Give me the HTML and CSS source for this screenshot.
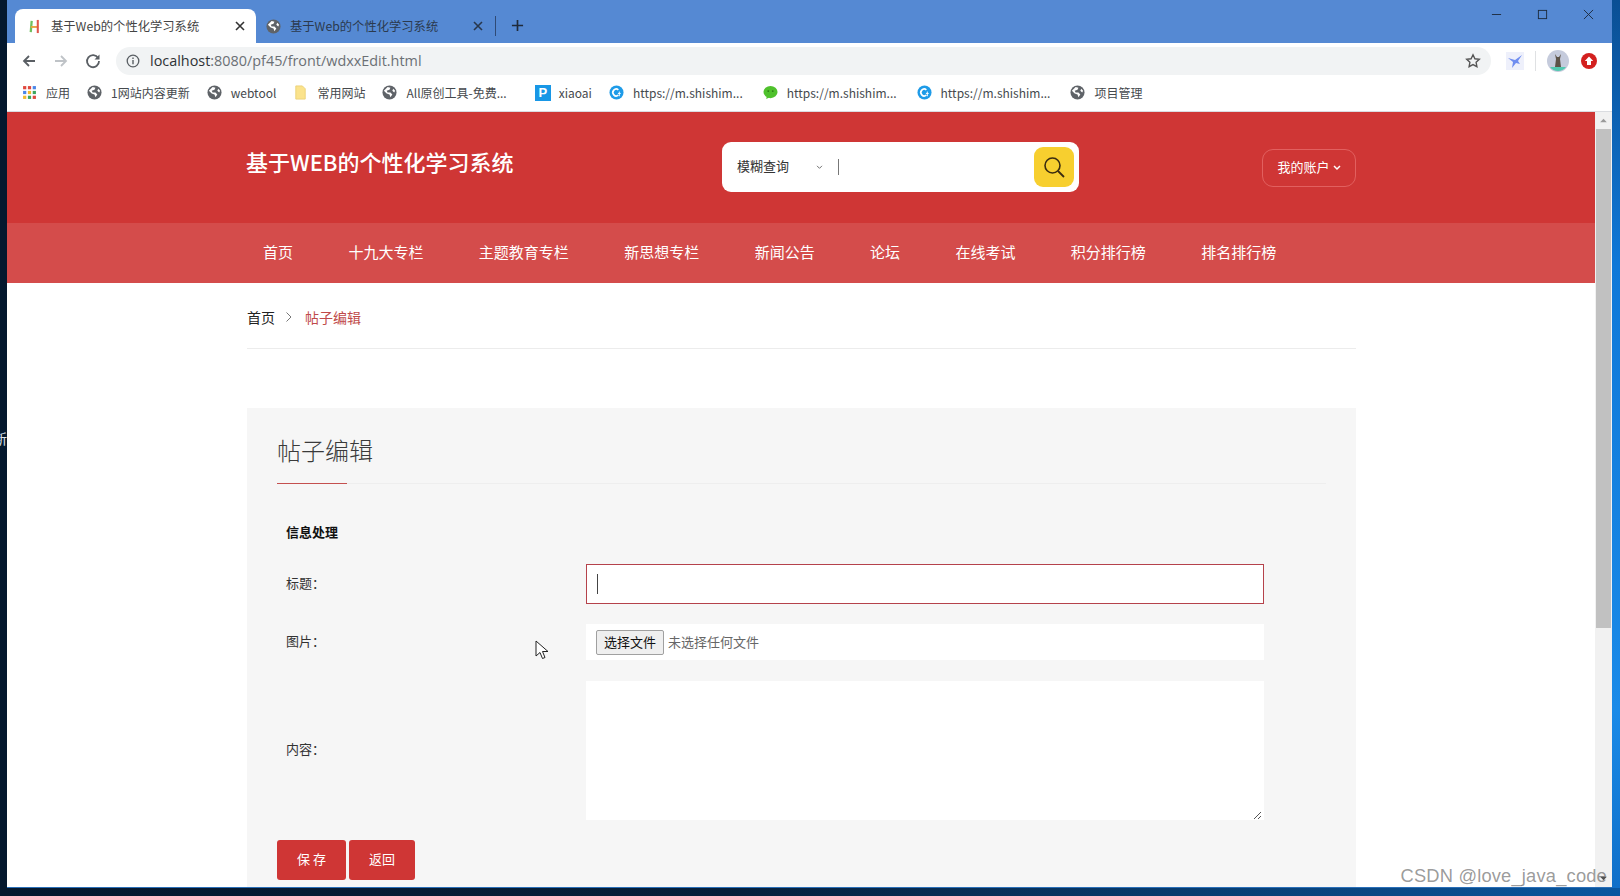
FILE: index.html
```html
<!DOCTYPE html>
<html lang="zh-CN">
<head>
<meta charset="UTF-8">
<meta name="viewport" content="width=device-width, initial-scale=1.0">
<title>基于Web的个性化学习系统</title>
<link rel="stylesheet" href="styles.css">
</head>
<body>
<div class="desktop">
  <span class="side-text">新</span>
  <div class="window">
    <div class="tabstrip">
      <div class="tab tab-active">
        <svg class="tab-icon" viewBox="0 0 16 16"><path d="M5 2L4 14" stroke="#6fbf5f" stroke-width="2.4"/><path d="M4 8.500h8" stroke="#e8a33d" stroke-width="2"/><path d="M11.500 1v14" stroke="#e0564a" stroke-width="2.200"/></svg>
        <span class="tab-title">基于Web的个性化学习系统</span>
        <svg class="tab-close" viewBox="0 0 10 10"><path d="M1 1l8 8M9 1L1 9" stroke="#333" stroke-width="1.600"/></svg>
      </div>
      <div class="tab tab-other">
        <svg class="tab-icon" viewBox="0 0 16 16"><use href="#globe"/></svg>
        <span class="tab-title">基于Web的个性化学习系统</span>
        <svg class="tab-close" viewBox="0 0 10 10"><path d="M1 1l8 8M9 1L1 9" stroke="#28374c" stroke-width="1.600"/></svg>
      </div>
      <span class="tab-sep"></span>
      <svg class="tab-new" viewBox="0 0 14 14"><path d="M7 1v12M1 7h12" stroke="#1f2a3a" stroke-width="1.800"/></svg>
      <div class="win-btns">
        <svg viewBox="0 0 12 12"><path d="M1 6h10" stroke="#1c2a3c" stroke-width="1"/></svg>
        <svg viewBox="0 0 12 12"><rect x="1.500" y="1.500" width="9" height="9" fill="none" stroke="#1c2a3c" stroke-width="1"/></svg>
        <svg viewBox="0 0 12 12"><path d="M1 1l10 10M11 1L1 11" stroke="#1c2a3c" stroke-width="1"/></svg>
      </div>
    </div>

    <div class="toolbar">
      <svg class="nav-icon" viewBox="0 0 16 16"><path d="M14 8H3M8 3L3 8l5 5" fill="none" stroke="#5a5f64" stroke-width="1.800"/></svg>
      <svg class="nav-icon" viewBox="0 0 16 16"><path d="M2 8h11M8 3l5 5-5 5" fill="none" stroke="#bfc3c7" stroke-width="1.800"/></svg>
      <svg class="nav-icon" viewBox="0 0 16 16"><path d="M13.200 5.200A6 6 0 1 0 14 8" fill="none" stroke="#5a5f64" stroke-width="1.800"/><path d="M14.500 1.500v5h-5z" fill="#5a5f64"/></svg>
      <div class="urlbar">
        <svg class="info-icon" viewBox="0 0 14 14"><circle cx="7" cy="7" r="5.800" fill="none" stroke="#5a5f64" stroke-width="1.300"/><path d="M7 6v4.200M7 3.600v1.400" stroke="#5a5f64" stroke-width="1.400"/></svg>
        <span class="url"><b>localhost</b>:8080/pf45/front/wdxxEdit.html</span>
        <svg class="star-icon" viewBox="0 0 16 16"><path d="M8 1.800l1.900 4 4.400.5-3.200 3 .8 4.400L8 11.600l-3.900 2.100.8-4.400-3.200-3 4.400-.5z" fill="none" stroke="#555" stroke-width="1.400"/></svg>
      </div>
      <svg class="ext-bird" viewBox="0 0 18 18"><rect width="18" height="18" fill="#eef0fb"/><path d="M16 3L9 8 2 6l5 4-1 6 4-5 4 1-2-3z" fill="#6f8df0"/></svg>
      <span class="toolbar-sep"></span>
      <svg class="avatar" viewBox="0 0 22 22"><circle cx="11" cy="11" r="11" fill="#c5cbdc"/><path d="M3 17h16a10 10 0 0 1-16 0z" fill="#52c9b0"/><path d="M8 4l1 5h4l1-5-2 3h-2zM9 9h4l1 8H8z" fill="#5c5348"/></svg>
      <svg class="ext-up" viewBox="0 0 16 16"><circle cx="8" cy="8" r="8" fill="#d3201f"/><path d="M8 3.500L12.200 8H10v4H6V8H3.800z" fill="#fff"/></svg>
    </div>

    <div class="bookmarks">
      <div class="bm">
        <svg class="bm-icon" viewBox="0 0 14 14">
          <g fill="#e0483e"><rect x="1" y="1" width="3" height="3"/><rect x="5.500" y="1" width="3" height="3"/></g><rect x="10" y="1" width="3" height="3" fill="#4a86e8"/>
          <rect x="1" y="5.500" width="3" height="3" fill="#4a86e8"/><rect x="5.500" y="5.500" width="3" height="3" fill="#f2b92c"/><rect x="10" y="5.500" width="3" height="3" fill="#3da55c"/>
          <rect x="1" y="10" width="3" height="3" fill="#f2b92c"/><rect x="5.500" y="10" width="3" height="3" fill="#3da55c"/><rect x="10" y="10" width="3" height="3" fill="#e0483e"/>
        </svg>应用</div>
      <div class="bm"><svg class="bm-icon" viewBox="0 0 16 16"><use href="#globe"/></svg>1网站内容更新</div>
      <div class="bm"><svg class="bm-icon" viewBox="0 0 16 16"><use href="#globe"/></svg>webtool</div>
      <div class="bm"><svg class="bm-icon" viewBox="0 0 16 16"><path d="M3 1h7l3 3v11H3z" fill="#fbe38c" stroke="#ecd277"/></svg>常用网站</div>
      <div class="bm"><svg class="bm-icon" viewBox="0 0 16 16"><use href="#globe"/></svg>All原创工具-免费...</div>
      <div class="bm bm-p"><span class="p-icon">P</span>xiaoai</div>
      <div class="bm bm-wide"><svg class="bm-icon" viewBox="0 0 16 16"><use href="#cicon"/></svg>https://m.shishim...</div>
      <div class="bm bm-wide"><svg class="bm-icon" viewBox="0 0 16 16"><ellipse cx="8" cy="7.500" rx="7.500" ry="6.500" fill="#4fc12c"/><path d="M4 12l-.5 3 3.500-2z" fill="#4fc12c"/><circle cx="5.600" cy="6.500" r="1" fill="#2c7a16"/><circle cx="10.400" cy="6.500" r="1" fill="#2c7a16"/></svg>https://m.shishim...</div>
      <div class="bm bm-wide"><svg class="bm-icon" viewBox="0 0 16 16"><use href="#cicon"/></svg>https://m.shishim...</div>
      <div class="bm"><svg class="bm-icon" viewBox="0 0 16 16"><use href="#globe"/></svg>项目管理</div>
    </div>

    <div class="viewport">
      <div class="page">
        <header class="site-head">
          <div class="wrap head-row">
            <div class="logo">基于WEB的个性化学习系统</div>
            <div class="search">
              <span class="search-type">模糊查询</span>
              <svg class="chev-sm" viewBox="0 0 8 6"><path d="M1 1l3 3 3-3" fill="none" stroke="#555" stroke-width="1"/></svg>
              <span class="search-caret"></span>
              <button class="search-btn">
                <svg viewBox="0 0 22 22"><circle cx="9.500" cy="9.500" r="7.500" fill="none" stroke="#3a2c10" stroke-width="1.600"/><path d="M15 15l6 6" stroke="#3a2c10" stroke-width="1.800"/></svg>
              </button>
            </div>
            <div class="account"><span>我的账户</span><svg viewBox="0 0 8 6"><path d="M1 1l3 3 3-3" fill="none" stroke="#fff" stroke-width="1.500"/></svg></div>
          </div>
        </header>
        <nav class="site-nav">
          <div class="wrap nav-row">
            <a>首页</a><a>十九大专栏</a><a>主题教育专栏</a><a>新思想专栏</a><a>新闻公告</a><a>论坛</a><a>在线考试</a><a>积分排行榜</a><a>排名排行榜</a>
          </div>
        </nav>
        <div class="wrap">
          <div class="crumbs">
            <span>首页</span>
            <svg viewBox="0 0 8 12"><path d="M1.500 1.500L6 6l-4.500 4.500" fill="none" stroke="#777" stroke-width="1"/></svg>
            <span class="crumb-now">帖子编辑</span>
          </div>
          <section class="panel">
            <h2 class="panel-title">帖子编辑</h2>
            <h3 class="form-head">信息处理</h3>
            <div class="form-row row-title">
              <label>标题：</label>
              <div class="fake-input"><span class="input-caret"></span></div>
            </div>
            <div class="form-row row-file">
              <label>图片：</label>
              <div class="file-box"><span class="file-btn">选择文件</span><span class="file-none">未选择任何文件</span></div>
            </div>
            <div class="form-row row-text">
              <label>内容：</label>
              <div class="text-box">
                <svg class="resizer" viewBox="0 0 9 9"><path d="M1 8l7-7M5 8l3-3" stroke="#555" stroke-width="1"/></svg>
              </div>
            </div>
            <div class="form-btns">
              <button class="btn btn-save">保 存</button>
              <button class="btn btn-back">返回</button>
            </div>
          </section>
        </div>
      </div>
      <div class="scrollbar">
        <svg class="sb-arrow" viewBox="0 0 10 6"><path d="M1 5l4-4 4 4z" fill="#9a9a9a"/></svg>
        <div class="sb-thumb"></div>
        <svg class="sb-arrow sb-down" viewBox="0 0 10 6"><path d="M1 1l4 4 4-4z" fill="#505050"/></svg>
      </div>
      <svg class="cursor" viewBox="0 0 14 20"><path d="M1 1v15l4-3.500 2.500 6 2.500-1-2.500-6H13z" fill="#fff" stroke="#222" stroke-width="1"/></svg>
      <div class="watermark">CSDN @love_java_code</div>
    </div>
  </div>
</div>

<svg class="defs" width="0" height="0">
  <defs>
    <g id="globe"><circle cx="8" cy="8" r="7.500" fill="#5f6368"/><path d="M6 2l3 1-1 2-3 1 1 2 3 0 2 2-2 3-1-3-3-1-3-3zM12 4l2 2-1 2-2-2z" fill="#fff"/></g>
    <g id="cicon"><circle cx="8" cy="8" r="7.500" fill="#1e9be8"/><path d="M10 5.200A3.600 3.600 0 1 0 10 10.800" fill="none" stroke="#fff" stroke-width="1.800"/><path d="M11 7v5M9.500 9h3" stroke="#fff" stroke-width="1"/></g>
  </defs>
</svg>
</body>
</html>
```

FILE: styles.css
```css
* {
  box-sizing: border-box;
}

html, body {
  margin: 0;
  height: 100%;
  overflow: hidden;
}

body {
  font-family: "Noto Sans CJK SC", "Noto Sans", sans-serif;
  color: #333;
}

.defs {
  display: block;
  height: 0;
}

.desktop {
  height: 896px;
  padding: 0 8px 8px 7px;
  background:
    linear-gradient(to bottom, #0a4f94 0, #0f78d8 30%, #1a8ae8 80%, #0f6fc8 100%) right top / 8px 888px no-repeat,
    linear-gradient(to right, #04182e 0, #061f3a 45%, #0a57a0 100%);
  position: relative;
}

.side-text {
  position: absolute;
  left: -7px;
  top: 428px;
  font-size: 14px;
  color: #dfe6ee;
}

.window {
  height: 888px;
  display: flex;
  flex-direction: column;
  background: #fff;
  border-bottom: 1px solid #2a6fb8;
}

/* browser frame */
.tabstrip {
  height: 43px;
  flex: none;
  background: #5589d3;
  padding: 9px 0 0 8px;
  display: flex;
  align-items: stretch;
}

.tab {
  width: 241px;
  flex: none;
  display: flex;
  align-items: center;
  padding: 0 11px 0 12px;
  font-size: 12.3px;
  color: #2b3a4e;
}

.tab-other {
  width: 239px;
  padding: 0 12px 0 10px;
}

.tab-active {
  background: #fff;
  border-radius: 8px 8px 0 0;
  color: #444;
}

.tab-icon {
  width: 15px;
  height: 15px;
  margin-right: 9px;
}

.tab-title {
  flex: 1;
}

.tab-close {
  width: 10px;
  height: 10px;
}

.tab-sep {
  width: 1px;
  height: 20px;
  margin: 7px 0 0 0;
  background: #2f4a75;
}

.tab-new {
  width: 13px;
  height: 13px;
  margin: 10px 0 0 15px;
}

.win-btns {
  margin-left: auto;
  margin-top: -9px;
  display: flex;
  gap: 35px;
  padding: 9px 18px 0 0;
}

.win-btns svg {
  width: 11px;
  height: 11px;
}

.toolbar {
  height: 33px;
  flex: none;
  display: flex;
  align-items: center;
  padding: 2px 0 0 14px;
  background: #fff;
}

.nav-icon {
  width: 16px;
  height: 16px;
  margin-right: 16px;
}

.urlbar {
  width: 1375px;
  height: 28px;
  margin-left: -1px;
  background: #f1f3f4;
  border-radius: 14px;
  display: flex;
  align-items: center;
  padding: 0 10px 0 10px;
}

.info-icon {
  width: 14px;
  height: 14px;
  margin-right: 10px;
}

.url {
  flex: 1;
  font-family: "Open Sans", sans-serif;
  font-size: 14.4px;
  color: #6b7075;
}

.url b {
  font-weight: 400;
  color: #2e3236;
}

.star-icon {
  width: 16px;
  height: 16px;
}

.ext-bird {
  width: 18px;
  height: 18px;
  margin-left: 15px;
}

.toolbar-sep {
  width: 1px;
  height: 20px;
  margin: 0 11px;
  background: #dfe1e3;
}

.avatar {
  width: 22px;
  height: 22px;
}

.ext-up {
  width: 16px;
  height: 16px;
  margin-left: 12px;
}

.bookmarks {
  height: 36px;
  flex: none;
  display: flex;
  align-items: center;
  padding: 0 0 2px 15px;
  font-size: 12px;
  color: #45494d;
  border-bottom: 1px solid #dadce0;
}

.bm {
  display: flex;
  align-items: center;
  margin-right: 17px;
  white-space: nowrap;
}

.bm-wide {
  margin-right: 20px;
}

.bm-icon {
  width: 15px;
  height: 15px;
  margin-right: 9px;
  flex: none;
}

.p-icon {
  width: 16px;
  height: 16px;
  margin-right: 8px;
  background: #1897e6;
  color: #fff;
  font: 700 13px "Liberation Sans", sans-serif;
  text-align: center;
  line-height: 16px;
}

.bm-p {
  margin-left: 11px;
}

/* page inside the browser */
.viewport {
  flex: 1;
  min-height: 0;
  display: flex;
  position: relative;
  overflow: hidden;
}

.page {
  flex: 1;
  min-width: 0;
  background: #fff;
}

.wrap {
  width: 1109px;
  margin-left: 240px;
}

.site-head {
  height: 111px;
  background: #cf3635;
}

.head-row {
  display: flex;
  align-items: flex-start;
  padding-top: 30px;
}

.logo {
  width: 475px;
  margin-left: -1px;
  margin-right: 1px;
  font-size: 22px;
  font-weight: 500;
  line-height: 38px;
  color: #fff;
  white-space: nowrap;
}

.search {
  width: 357px;
  height: 50px;
  background: #fff;
  border-radius: 9px;
  display: flex;
  align-items: center;
  padding: 0 5px 0 15px;
  font-size: 13px;
  color: #333;
}

.search-type {
  padding-bottom: 4px;
}

.chev-sm {
  width: 7px;
  height: 5px;
  margin-left: 27px;
}

.search-caret {
  width: 1px;
  height: 16px;
  margin-left: 15px;
  background: #777;
}

.search-btn {
  width: 40px;
  height: 40px;
  margin-left: auto;
  border: 0;
  border-radius: 9px;
  background: #f7cf2f;
  padding: 9px;
}

.search-btn svg {
  display: block;
  width: 22px;
  height: 22px;
}

.account {
  width: 94px;
  height: 38px;
  margin: 7px 0 0 183px;
  border: 1px solid #e2605f;
  border-radius: 11px;
  display: flex;
  align-items: center;
  justify-content: center;
  gap: 3px;
  font-size: 13px;
  color: #fff;
}

.account span {
  padding-bottom: 4px;
}

.account svg {
  width: 8px;
  height: 6px;
}

.site-nav {
  height: 60px;
  background: #d44c4b;
}

.nav-row {
  height: 60px;
  display: flex;
  align-items: center;
  gap: 55.4px;
  padding: 0 0 4px 16px;
  font-size: 15px;
  color: #fff;
  white-space: nowrap;
}

.crumbs {
  height: 66px;
  padding-top: 2px;
  border-bottom: 1px solid #ececec;
  display: flex;
  align-items: center;
  gap: 10px;
  font-size: 14px;
  color: #222;
}

.crumbs svg {
  width: 8px;
  height: 12px;
  margin-right: 2px;
}

.crumb-now {
  color: #bf4a4a;
}

.panel {
  margin-top: 59px;
  height: 480px;
  background: #f6f6f6;
  padding: 0 30px;
}

.panel-title {
  margin: 0;
  height: 76px;
  padding-top: 22px;
  font-size: 24px;
  font-weight: 300;
  line-height: 40px;
  color: #3a3a3a;
  border-bottom: 1px solid #eeeeee;
  position: relative;
}

.panel-title::after {
  content: "";
  position: absolute;
  left: 0;
  bottom: -1px;
  width: 70px;
  height: 1px;
  background: #c4504f;
}

.form-head {
  margin: 38px 0 0 9px;
  font-size: 13px;
  line-height: 20px;
  font-weight: 700;
  color: #111;
}

.form-row {
  display: flex;
  align-items: center;
}

.form-row label {
  width: 309px;
  padding: 0 0 4px 9px;
  font-size: 13px;
  color: #333;
}

.row-title {
  margin-top: 22px;
}

.fake-input {
  width: 678px;
  height: 40px;
  background: #fff;
  border: 1px solid #b5424b;
  display: flex;
  align-items: center;
  padding-left: 10px;
}

.input-caret {
  width: 1px;
  height: 20px;
  background: #444;
}

.row-file {
  margin-top: 20px;
}

.file-box {
  width: 678px;
  height: 36px;
  background: #fff;
  display: flex;
  align-items: center;
  padding-left: 10px;
  font-size: 13px;
}

.file-btn {
  width: 68px;
  height: 25px;
  background: #efefef;
  border: 1px solid #a0a0a0;
  border-radius: 2px;
  text-align: center;
  line-height: 22px;
  color: #111;
}

.file-none {
  margin: 0 0 2px 4px;
  color: #666;
}

.row-text {
  margin-top: 21px;
}

.text-box {
  width: 678px;
  height: 139px;
  background: #fff;
  position: relative;
}

.resizer {
  position: absolute;
  right: 2px;
  bottom: 0;
  width: 9px;
  height: 9px;
}

.form-btns {
  display: flex;
  gap: 3px;
  margin-top: 20px;
}

.btn {
  height: 40px;
  border: 0;
  border-radius: 3px;
  background: #cf3635;
  color: #fff;
  font: inherit;
  font-size: 13px;
  padding: 0 0 3px;
}

.btn-save {
  width: 69px;
}

.btn-back {
  width: 66px;
}

.scrollbar {
  width: 17px;
  flex: none;
  background: #f1f1f1;
  display: flex;
  flex-direction: column;
  align-items: center;
  padding: 0 1px;
}

.sb-arrow {
  width: 9px;
  height: 5px;
  margin: 6px 0;
  flex: none;
}

.sb-thumb {
  width: 15px;
  height: 499px;
  background: #c1c1c1;
}

.sb-down {
  margin-top: auto;
}

.cursor {
  position: absolute;
  left: 528px;
  top: 528px;
  width: 14px;
  height: 20px;
}

.watermark {
  position: absolute;
  right: 5px;
  bottom: 0;
  font-family: "Liberation Sans", sans-serif;
  font-size: 18.3px;
  color: rgba(90, 90, 90, 0.62);
  letter-spacing: 0.2px;
}
```
